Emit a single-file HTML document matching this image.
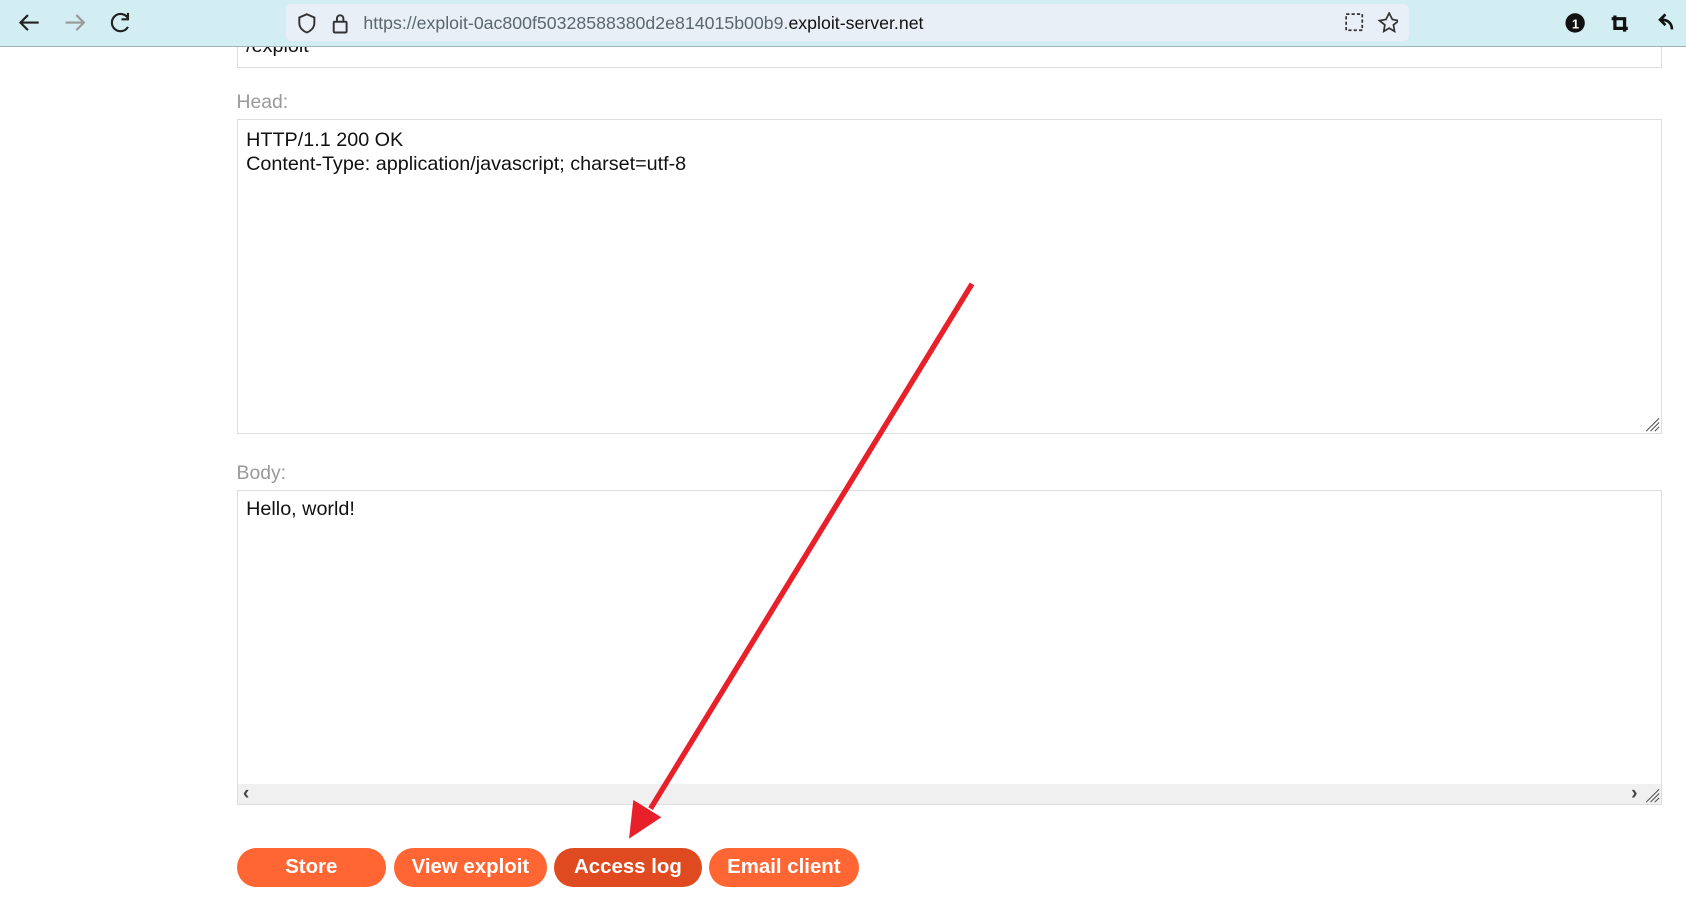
<!DOCTYPE html>
<html><head><meta charset="utf-8"><style>
html,body{margin:0;padding:0;background:#fff;overflow:hidden}
#w{zoom:1.07526;width:1568px;height:853px;position:relative;font-family:"Liberation Sans",sans-serif}
.tb{position:absolute;left:0;top:0;width:1568px;height:43px;background:#d3eef2;border-bottom:1px solid #9fb5b9}
.url{position:absolute;left:266px;top:4px;width:1044px;height:34px;background:#e8eff6;border-radius:5px}
.url span{position:absolute;left:72px;top:8px;font-size:16.5px;color:#5a6670}
.url b{font-weight:normal;color:#111}
.box{position:absolute;left:220px;width:1324px;border:1px solid #ddd;background:#fff}
.lbl{position:absolute;left:220px;font-size:18px;color:#999}
.txt{position:absolute;left:8px;font-size:18.4px;color:#111;line-height:22px}
.btn{position:absolute;top:789px;height:36px;border-radius:18px;background:#ff6633;color:#fff;font-weight:bold;font-size:19px;text-align:center;line-height:36px}
.grip{position:absolute;right:1px;bottom:1px}
</style></head><body><div id="w">
<div class="box" style="top:20px;height:41px;overflow:hidden"><div class="txt" style="top:12px">/exploit</div></div>
<div class="tb">
<svg style="position:absolute;left:0;top:0" width="140" height="43" fill="none" stroke="#222" stroke-width="2">
<path d="M36 21H19M26 14l-7 7 7 7"/><path stroke="#999" d="M61 21h17M71 14l7 7-7 7"/>
<path d="M119 17a8 8 0 1 0 0 8M119 12v6h-6"/></svg>
<div class="url">
<svg style="position:absolute;left:8px;top:6px" width="60" height="22" fill="none" stroke="#333" stroke-width="1.8"><path d="M11 3l7 3v5c0 5-4 8-7 9-3-1-7-4-7-9V6z"/><rect x="36" y="10" width="12" height="10" rx="1"/><path d="M39 10V7a3 3 0 0 1 6 0v3"/></svg>
<span>https://exploit-0ac800f50328588380d2e814015b00b9.<b>exploit-server.net</b></span>
<svg style="position:absolute;left:984px;top:7px" width="50" height="20" fill="none" stroke="#333" stroke-width="1.6"><rect x="2" y="2" width="15" height="15" stroke-dasharray="3 2"/><path d="M42 1l3 6 6 1-5 4 1 6-5-3-5 3 1-6-5-4 6-1z"/></svg>
</div>
<svg style="position:absolute;left:1450px;top:8px" width="110" height="26"><circle cx="15" cy="13" r="9" fill="#111"/><text x="12" y="18" font-size="12" fill="#fff" font-family="Liberation Sans" font-weight="bold">1</text>
<path d="M52 6v12h12M49 9h12v12" stroke="#111" stroke-width="3" fill="none"/><path d="M105 19c0-6-4-9-10-9M99 5l-5 5 5 5" stroke="#111" stroke-width="2.5" fill="none"/></svg>
</div>
<div class="lbl" style="top:85px">Head:</div>
<div class="box" style="top:111px;height:291px"><div class="txt" style="top:8px">HTTP/1.1 200 OK<br>Content-Type: application/javascript; charset=utf-8</div>
<svg class="grip" width="16" height="16" stroke="#555" stroke-width="1"><path d="M15 3L3 15M15 7L7 15M15 11l-4 4"/></svg></div>
<div class="lbl" style="top:430px">Body:</div>
<div class="box" style="top:456px;height:291px"><div class="txt" style="top:6px">Hello, world!</div>
<div style="position:absolute;left:0;bottom:0;width:100%;height:19px;background:#f0f0f0;color:#444;font-size:18px;font-weight:bold"><span style="position:absolute;left:5px;top:-2px">‹</span><span style="position:absolute;right:22px;top:-2px">›</span></div>
<svg class="grip" width="16" height="16" stroke="#555" stroke-width="1"><path d="M15 3L3 15M15 7L7 15M15 11l-4 4"/></svg></div>
<div class="btn" style="left:220px;width:139px">Store</div>
<div class="btn" style="left:366px;width:143px">View exploit</div>
<div class="btn" style="left:515px;width:138px;background:#e04a20">Access log</div>
<div class="btn" style="left:659px;width:140px">Email client</div>
<svg style="position:absolute;left:0;top:0" width="1568" height="853"><path d="M904 264L605 752" stroke="#e8202a" stroke-width="5"/><path d="M585 780l4-36 26 16z" fill="#e8202a"/></svg>
</div></body></html>
